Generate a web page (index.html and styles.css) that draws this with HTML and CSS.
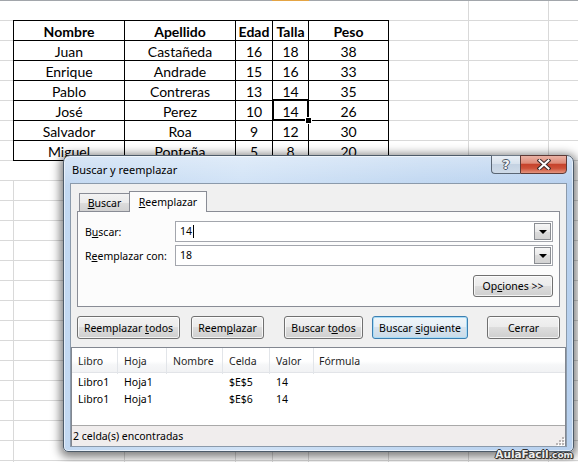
FILE: index.html
```html
<!DOCTYPE html>
<html lang="es">
<head>
<meta charset="utf-8">
<title>Buscar y reemplazar</title>
<link rel="stylesheet" href="styles.css">
</head>
<body>
<div class="sheet">
  <div class="data">
    <div class="h">Nombre</div><div class="h">Apellido</div><div class="h">Edad</div><div class="h">Talla</div><div class="h">Peso</div>
    <div>Juan</div><div>Castañeda</div><div>16</div><div>18</div><div>38</div>
    <div>Enrique</div><div>Andrade</div><div>15</div><div>16</div><div>33</div>
    <div>Pablo</div><div>Contreras</div><div>13</div><div>14</div><div>35</div>
    <div>José</div><div>Perez</div><div>10</div><div class="active">14<span class="sel"></span><span class="handle"></span></div><div>26</div>
    <div>Salvador</div><div>Roa</div><div>9</div><div>12</div><div>30</div>
    <div>Miguel</div><div>Ponteña</div><div>5</div><div>8</div><div>20</div>
  </div>
</div>

<div class="dialog">
  <div class="titlebar">
    <span class="title">Buscar y reemplazar</span>
    <div class="caps">
      <span class="cb help">?</span>
      <span class="cb close"><svg width="14" height="11" viewBox="0 0 14 11"><path d="M2.5 1.5 L11.5 9.5 M11.5 1.5 L2.5 9.5" stroke="#3b2a2a" stroke-width="4" stroke-linecap="square"/><path d="M2.5 1.5 L11.5 9.5 M11.5 1.5 L2.5 9.5" stroke="#fff" stroke-width="2" stroke-linecap="square"/></svg></span>
    </div>
  </div>
  <div class="client">
    <div class="tabs">
      <span class="tab"><u>B</u>uscar</span>
      <span class="tab on"><u>R</u>eemplazar</span>
    </div>
    <div class="panel">
      <div class="field">
        <span class="lbl">B<u>u</u>scar:</span>
        <div class="combo"><span class="val">14<i class="caret"></i></span><span class="drop"><i class="tri"></i></span></div>
      </div>
      <div class="field">
        <span class="lbl">R<u>e</u>emplazar con:</span>
        <div class="combo"><span class="val">18</span><span class="drop"><i class="tri"></i></span></div>
      </div>
      <div class="opts"><button class="btn b-opt"><span>Op<u>c</u>iones &gt;&gt;</span></button></div>
    </div>
    <div class="actions">
      <button class="btn w1"><span>Reemplazar <u>t</u>odos</span></button>
      <button class="btn w2"><span>Reem<u>p</u>lazar</span></button>
      <button class="btn w3"><span>Buscar t<u>o</u>dos</span></button>
      <button class="btn w4 focus"><span>Buscar <u>s</u>iguiente</span></button>
      <button class="btn w5"><span>Cerrar</span></button>
    </div>
    <div class="results">
      <div class="list">
        <div class="lh">
          <span>Libro</span><span>Hoja</span><span>Nombre</span><span>Celda</span><span>Valor</span><span>Fórmula</span>
        </div>
        <div class="rows">
          <div class="lr"><span>Libro1</span><span>Hoja1</span><span></span><span>$E$5</span><span>14</span><span></span></div>
          <div class="lr"><span>Libro1</span><span>Hoja1</span><span></span><span>$E$6</span><span>14</span><span></span></div>
        </div>
      </div>
      <div class="status">2 celda(s) encontradas
        <svg class="grip" width="10" height="10" viewBox="0 0 10 10"><g fill="#fff"><rect x="8" y="2" width="2" height="2"/><rect x="5" y="5" width="2" height="2"/><rect x="8" y="5" width="2" height="2"/><rect x="2" y="8" width="2" height="2"/><rect x="5" y="8" width="2" height="2"/><rect x="8" y="8" width="2" height="2"/></g><g fill="#b8b4b4"><rect x="7" y="1" width="2" height="2"/><rect x="4" y="4" width="2" height="2"/><rect x="7" y="4" width="2" height="2"/><rect x="1" y="7" width="2" height="2"/><rect x="4" y="7" width="2" height="2"/><rect x="7" y="7" width="2" height="2"/></g></svg>
      </div>
    </div>
  </div>
</div>

<div class="wm">AulaFacil<span>.com</span></div>
</body>
</html>
```
FILE: styles.css
```css
* { box-sizing: border-box; margin: 0; padding: 0; }
html, body { width: 578px; height: 462px; overflow: hidden; background: #fff; }
body { position: relative; font-family: "Noto Sans", "Open Sans", sans-serif; color: #000; }

/* ---------- spreadsheet ---------- */
.sheet {
  width: 578px;
  height: 462px;
  padding: 20px 0 0 13px;
  background:
    linear-gradient(90deg, transparent 272px, #e4a444 272px, #e4a444 309px, transparent 309px) 0 0 / 100% 1px no-repeat,
    linear-gradient(#a2a6ab, #a2a6ab) 0 0 / 100% 1px no-repeat,
    linear-gradient(#d9d9d9, #d9d9d9) 13px 180px / 1px 100% no-repeat,
    linear-gradient(#d9d9d9, #d9d9d9) 124px 20px / 1px 100% no-repeat,
    linear-gradient(#d9d9d9, #d9d9d9) 235px 20px / 1px 100% no-repeat,
    linear-gradient(#d9d9d9, #d9d9d9) 272px 20px / 1px 100% no-repeat,
    linear-gradient(#d9d9d9, #d9d9d9) 308px 20px / 1px 100% no-repeat,
    linear-gradient(#d9d9d9, #d9d9d9) 388px 20px / 1px 100% no-repeat,
    linear-gradient(#d9d9d9, #d9d9d9) 468px 0 / 1px 100% no-repeat,
    linear-gradient(#d9d9d9, #d9d9d9) 548px 0 / 1px 100% no-repeat,
    repeating-linear-gradient(180deg, #d9d9d9 0 1px, transparent 1px 20px),
    #fff;
}
.data {
  display: grid;
  grid-template-columns: 110px 110px 36px 35px 79px;
  grid-auto-rows: 19px;
  gap: 1px;
  width: max-content;
  background: #000;
  border: 1px solid #000;
}
.data > div {
  background: #fff;
  text-align: center;
  font: 14px/21px Lato, "Liberation Sans", sans-serif;
  white-space: nowrap;
}
.data > .h { font-weight: bold; }
.data > .active { position: relative; }
.sel {
  position: absolute;
  left: -1px; right: -1px; top: -2px; bottom: -1px;
  border: 2px solid #000;
}
.handle {
  position: absolute;
  right: -4px; bottom: -4px;
  width: 7px; height: 7px;
  background: #000;
  border: 1px solid #fff;
}

/* ---------- dialog window ---------- */
.dialog {
  position: absolute;
  left: 63px;
  top: 155px;
  width: 511px;
  height: 297px;
  display: flex;
  flex-direction: column;
  padding: 0 6px 4px;
  border: 1px solid #4d5b69;
  border-radius: 7px 7px 5px 5px;
  background:
    linear-gradient(180deg, rgba(255,255,255,.35), rgba(255,255,255,0) 30px),
    linear-gradient(90deg, #c2d8f1 0%, #d0e2f6 35%, #c0d7f1 70%, #b7d0ee 100%);
  box-shadow: inset 0 0 0 1px rgba(255,255,255,.55), 0 2px 10px 3px rgba(0,0,0,.5);
}
.titlebar {
  height: 27px;
  flex: none;
  display: flex;
  justify-content: space-between;
  align-items: flex-start;
}
.title { font-size: 11px; line-height: 15px; padding: 6px 0 0 2px; }
.caps { display: flex; margin-top: -1px; }
.cb {
  height: 19px;
  display: flex;
  align-items: center;
  justify-content: center;
  border: 1px solid #5a6674;
  border-top-color: #6d7986;
}
.help {
  width: 29px;
  border-right: 0;
  border-radius: 0 0 0 4px;
  background: linear-gradient(#e9eff6, #d8e2ed 45%, #c4d2e2 50%, #cfdbe8);
  font: bold 13px/1 "DejaVu Sans", sans-serif;
  color: #f3f5f8;
  text-shadow: 1px 0 0 #4a5563, -1px 0 0 #4a5563, 0 1px 0 #4a5563, 0 -1px 0 #4a5563;
}
.close {
  width: 47px;
  border-color: #5e3a36;
  border-radius: 0 0 4px 0;
  background: linear-gradient(#ebb3a6, #de8b78 42%, #c6432c 50%, #cd5138 72%, #e4957f);
}

.client {
  flex: 1;
  display: flex;
  flex-direction: column;
  background: #f0f0f0;
  border: 1px solid #8b9aab;
}

/* tabs */
.tabs {
  height: 20px;
  flex: none;
  display: flex;
  align-items: flex-end;
  margin: 7px 6px 0;
  padding-left: 2px;
}
.tab {
  height: 18px;
  width: 51px;
  border: 1px solid #898c95;
  border-bottom: 0;
  background: linear-gradient(#f3f3f3, #ebebeb 50%, #dddddd 50%, #d2d2d2);
  font-size: 10.5px;
  line-height: 16px;
  padding-top: 1px;
  text-align: center;
}
.tab.on {
  height: 21px;
  width: 78px;
  margin-left: -1px;
  margin-bottom: -1px;
  padding-top: 2px;
  background: #fcfcfc;
  position: relative;
  z-index: 1;
}
.panel {
  flex: none;
  margin: 0 6px;
  border: 1px solid #898c95;
  background: #fcfcfc;
  padding: 9px 6px 9px 7px;
  display: flex;
  flex-direction: column;
  gap: 3px;
  font-size: 10.5px;
}
.field { display: flex; align-items: center; height: 21px; }
.lbl { width: 90px; flex: none; }
.combo {
  flex: 1;
  height: 21px;
  display: flex;
  border: 1px solid #a3a6ad;
  background: #fff;
  padding: 1px;
}
.val { flex: 1; padding-left: 3px; line-height: 17px; display: flex; align-items: center; }
.caret { display: inline-block; width: 1px; height: 13px; background: #000; margin-left: 1px; }
.drop {
  width: 17px;
  border: 1px solid #8a8d92;
  background: linear-gradient(#f6f6f6, #e9e9e9 50%, #dcdcdc 50%, #d3d3d3);
  display: flex;
  align-items: center;
  justify-content: center;
}
.tri {
  width: 0; height: 0;
  border-left: 4px solid transparent;
  border-right: 4px solid transparent;
  border-top: 4px solid #000;
  margin-top: 1px;
}
.opts { display: flex; justify-content: flex-end; margin-top: 6px; }

/* buttons */
.btn {
  height: 23px;
  font: inherit;
  font-size: 10.5px;
  color: #000;
  border: 1px solid #707070;
  border-radius: 3px;
  background: linear-gradient(#f2f2f2 0%, #ebebeb 50%, #dddddd 50%, #cfcfcf 100%);
  box-shadow: inset 0 0 0 1px rgba(255,255,255,.75);
  display: flex;
  align-items: center;
  justify-content: center;
  white-space: nowrap;
}
.b-opt { width: 80px; height: 22px; }
.actions {
  flex: none;
  display: flex;
  height: 23px;
  margin: 9px 6px 0;
}
.w1 { width: 103px; }
.w2 { width: 73px; margin-left: 11px; }
.w3 { width: 79px; margin-left: 20px; }
.w4 { width: 96px; margin-left: 9px; }
.w5 { width: 73px; margin-left: 19px; }
.btn.focus {
  border-color: #3c7fb1;
  box-shadow: inset 0 0 0 1px #a8dcf7;
  background: linear-gradient(#f0f6fa 0%, #e6eff6 50%, #d6e3ee 50%, #cbdbe8 100%);
}

/* results */
.results {
  flex: 1;
  margin-top: 8px;
  display: flex;
  flex-direction: column;
  border: 1px solid #828790;
  border-bottom: 0;
  font-size: 10.5px;
}
.list {
  height: 78px;
  flex: none;
  background: #fff;
  border-bottom: 1px solid #a9a9a9;
}
.lh, .lr {
  display: grid;
  grid-template-columns: 46px 49px 56px 47px 44px 1fr;
}
.lh {
  height: 25px;
  border-bottom: 1px solid #e2e4e8;
  background: linear-gradient(#ffffff 0%, #ffffff 55%, #f6f7f8 70%, #f1f2f4 100%);
}
.lh span {
  border-right: 1px solid #e2e5e9;
  padding-left: 6px;
  padding-top: 1px;
  line-height: 25px;
  color: #1f1f1f;
}
.lh span:last-child { border-right: 0; padding-left: 5px; }
.rows { padding-top: 1px; }
.lr { height: 17px; line-height: 17px; }
.lr span { padding-left: 6px; white-space: nowrap; }
.status {
  flex: 1;
  position: relative;
  background: #f0eded;
  padding-left: 1px;
  line-height: 20px;
}
.grip { position: absolute; right: 0; bottom: 0; }

/* watermark */
.wm {
  position: absolute;
  right: 5px;
  bottom: 1px;
  font: bold 10.5px/11px "DejaVu Sans", sans-serif;
  color: #ececec;
  text-shadow: 1px 0 0 #333, -1px 0 0 #333, 0 1px 0 #333, 0 -1px 0 #333, 1px 1px 1px #000;
}
.wm span { font-size: 9px; }
```
